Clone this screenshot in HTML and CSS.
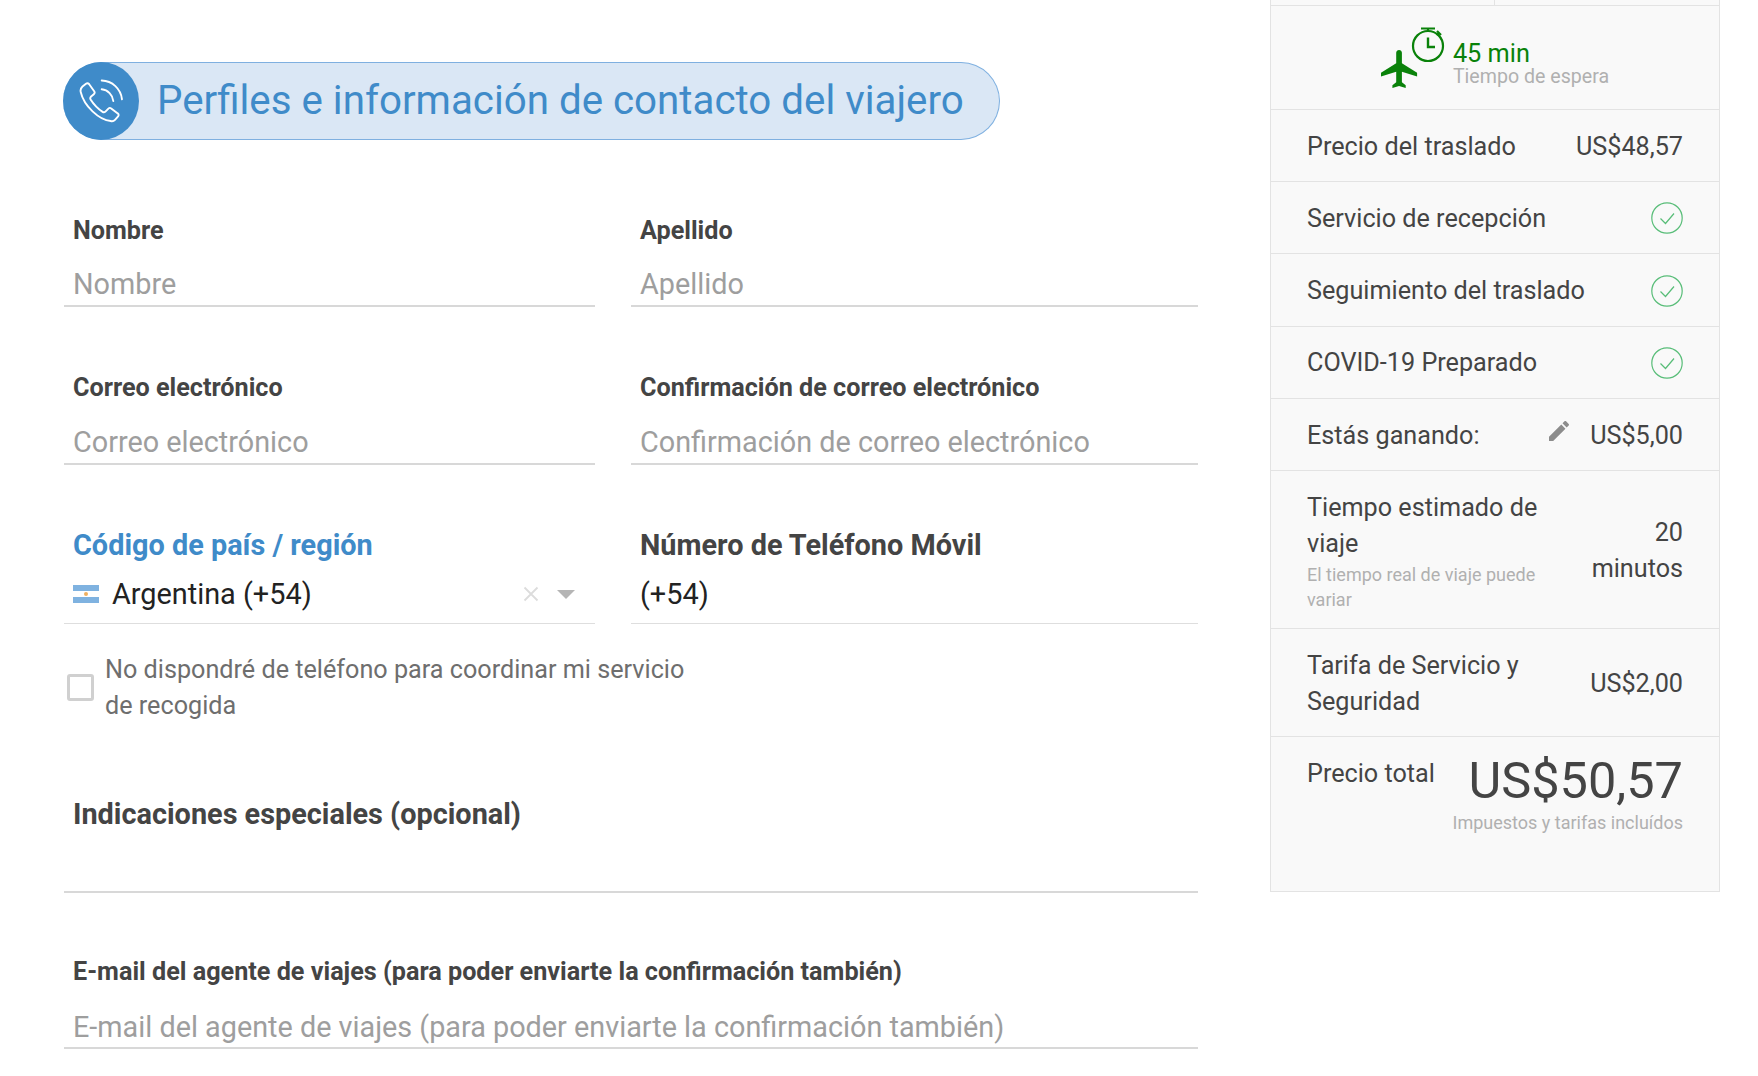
FILE: index.html
```html
<!DOCTYPE html>
<html lang="es">
<head>
<meta charset="utf-8">
<title>Perfiles e información de contacto del viajero</title>
<link rel="stylesheet" href="styles.css">
</head>
<body>
<div class="page">
  <main class="form">
    <h1 class="pill">
      <span class="pill-icon">
        <svg class="phone" viewBox="0 0 44 44" fill="none" stroke="#fff" stroke-width="1.9" stroke-linecap="round" stroke-linejoin="round">
          <path d="M22.700 10.300a13 13 0 0 1 11.600 11.700"/>
          <path d="M22.700 1.500a21 21 0 0 1 20.300 18.800"/>
          <path d="M3.500 7.500 7 4.700c1-.8 2.200-.6 3 .3l5.200 7.300c.7 1 .5 2.100-.4 2.900l-2.700 2.300c-1 .9-1.100 1.900-.5 3 2.800 4.500 7 9 12 12.400 1 .7 2 .5 2.800-.3l3-3c.8-.8 1.900-.9 2.800-.2l6.600 5c1 .7 1.100 2.100.3 3l-3.100 3.400c-1.100 1.200-2.700 1.700-4.300 1.200C20 41 5 27 1.700 13c-.5-2.100.3-4.100 1.800-5.500z"/>
        </svg>
      </span>
      <span class="pill-text">Perfiles e información de contacto del viajero</span>
    </h1>

    <div class="row row-first">
      <div class="field">
        <div class="label">Nombre</div>
        <div class="control placeholder">Nombre</div>
      </div>
      <div class="field">
        <div class="label">Apellido</div>
        <div class="control placeholder">Apellido</div>
      </div>
    </div>

    <div class="row">
      <div class="field">
        <div class="label">Correo electrónico</div>
        <div class="control placeholder">Correo electrónico</div>
      </div>
      <div class="field">
        <div class="label">Confirmación de correo electrónico</div>
        <div class="control placeholder">Confirmación de correo electrónico</div>
      </div>
    </div>

    <div class="row row-phone">
      <div class="field">
        <div class="label label-lg label-active">Código de país / región</div>
        <div class="control control-select">
          <svg class="flag" viewBox="0 0 26 18">
            <rect width="26" height="6" fill="#7fb2e0"/>
            <rect y="6" width="26" height="6" fill="#fff"/>
            <rect y="12" width="26" height="6" fill="#7fb2e0"/>
            <circle cx="13" cy="9" r="2" fill="#f0b060"/>
          </svg>
          <span class="select-value">Argentina (+54)</span>
          <svg class="clear" viewBox="0 0 16 16" fill="none" stroke="#dcdcdc" stroke-width="1.800">
            <path d="M1.500 1.500l13 13M14.500 1.500l-13 13"/>
          </svg>
          <span class="caret"></span>
        </div>
      </div>
      <div class="field">
        <div class="label label-lg">Número de Teléfono Móvil</div>
        <div class="control control-select"><span>(+54)</span></div>
      </div>
    </div>

    <label class="check">
      <span class="box"></span>
      <span class="check-text">No dispondré de teléfono para coordinar mi servicio de recogida</span>
    </label>

    <div class="notes">
      <div class="label label-lg">Indicaciones especiales (opcional)</div>
    </div>

    <div class="field agent">
      <div class="label">E-mail del agente de viajes (para poder enviarte la confirmación también)</div>
      <div class="control placeholder">E-mail del agente de viajes (para poder enviarte la confirmación también)</div>
    </div>
  </main>

  <aside class="summary">
    <div class="stub"><span class="stub-cell"></span></div>
    <div class="wait">
      <svg class="wait-icon" viewBox="0 0 64 64">
        <path fill="#0a820a" transform="translate(-3.800 19.200) scale(1.9)" d="M21 16v-2l-8-5V3.500c0-.83-.67-1.500-1.500-1.500S10 2.670 10 3.500V9l-8 5v2l8-2.500V19l-2 1.500V22l3.500-1 3.500 1v-1.500L13 19v-5.500l8 2.500z"/>
        <g fill="none" stroke="#0a820a" stroke-width="2.200">
          <circle cx="47" cy="19" r="15"/>
          <path d="M40 1.500h14M47 1.500V4M58 5.500l-2.500 2.500M56 4l4 4"/>
          <path d="M47 10.500V20h7" stroke-width="2.400"/>
        </g>
      </svg>
      <div class="wait-text">
        <div class="wait-time">45 min</div>
        <div class="wait-sub">Tiempo de espera</div>
      </div>
    </div>
    <div class="line"><span>Precio del traslado</span><span>US$48,57</span></div>
    <div class="line"><span>Servicio de recepción</span><svg class="ok" viewBox="0 0 32 32" fill="none" stroke="#58bd78" stroke-width="1.200"><circle cx="16" cy="16" r="15.200"/><path d="M9.500 16.500l5 5 8.500-10"/></svg></div>
    <div class="line"><span>Seguimiento del traslado</span><svg class="ok" viewBox="0 0 32 32" fill="none" stroke="#58bd78" stroke-width="1.200"><circle cx="16" cy="16" r="15.200"/><path d="M9.500 16.500l5 5 8.500-10"/></svg></div>
    <div class="line"><span>COVID-19 Preparado</span><svg class="ok" viewBox="0 0 32 32" fill="none" stroke="#58bd78" stroke-width="1.200"><circle cx="16" cy="16" r="15.200"/><path d="M9.500 16.500l5 5 8.500-10"/></svg></div>
    <div class="line">
      <span>Estás ganando:</span>
      <span class="earn">
        <svg class="pencil" viewBox="3 3 18 18"><path fill="#8c8c8c" d="M3 17.250V21h3.750L17.810 9.940l-3.750-3.750L3 17.250zM20.710 7.040c.39-.39.39-1.020 0-1.410l-2.340-2.340c-.39-.39-1.020-.39-1.410 0l-1.830 1.830 3.750 3.750 1.830-1.830z"/></svg>
        <span>US$5,00</span>
      </span>
    </div>
    <div class="line">
      <div class="line-main">
        Tiempo estimado de viaje
        <div class="line-sub">El tiempo real de viaje puede variar</div>
      </div>
      <div class="line-value">20 minutos</div>
    </div>
    <div class="line">
      <div class="line-main line-main-wide">Tarifa de Servicio y Seguridad</div>
      <div class="line-value">US$2,00</div>
    </div>
    <div class="total">
      <div class="total-label">Precio total</div>
      <div class="total-side">
        <div class="total-value">US$50,57</div>
        <div class="total-sub">Impuestos y tarifas incluídos</div>
      </div>
    </div>
  </aside>
</div>
</body>
</html>
```

FILE: styles.css
```css
* { box-sizing: border-box; }
html, body { margin: 0; padding: 0; background: #fff; }
body {
  font-family: Roboto, "Liberation Sans", sans-serif;
  color: #444;
  overflow: hidden;
}
.page {
  display: flex;
  align-items: flex-start;
  gap: 72px;
  padding-left: 64px;
  height: 1076px;
  overflow: hidden;
}
.form { width: 1134px; flex: none; padding-top: 62px; }

.pill {
  display: flex;
  align-items: center;
  width: 937px;
  height: 78px;
  margin: 0 0 0 -1px;
  background: #dae7f5;
  border: 1px solid #7fb0e0;
  border-left: 0;
  border-radius: 39px;
  font-weight: 400;
}
.pill-icon {
  flex: none;
  display: flex;
  align-items: center;
  justify-content: center;
  width: 76px;
  height: 78px;
  border-radius: 50%;
  background: #3f8bc9;
}
.phone { width: 44px; height: 44px; }
.pill-text {
  margin: -1px 0 0 18px;
  font-size: 40.300px;
  line-height: 48px;
  color: #3f8bc9;
  white-space: nowrap;
}

.row {
  display: grid;
  grid-template-columns: 531px 567px;
  column-gap: 36px;
  margin-top: 64px;
}
.row-first { margin-top: 74px; }
.row-phone { margin-top: 63px; }
.label {
  padding-left: 9px;
  font-size: 25.200px;
  font-weight: 700;
  line-height: 34px;
  color: #444;
  white-space: nowrap;
}
.label-lg { font-size: 28.850px; }
.label-active { color: #3f8bc9; }
.control {
  margin-top: 17px;
  padding: 0 9px 2px;
  height: 43px;
  font-size: 28.800px;
  line-height: 40px;
  border-bottom: 2px solid #d8d8d8;
  white-space: nowrap;
}
.row-first .control { margin-top: 16px; }
.placeholder { color: #9e9e9e; }
.control-select {
  display: flex;
  align-items: center;
  margin-top: 12px;
  height: 50px;
  padding-bottom: 9px;
  color: #222;
  font-size: 28.850px;
  border-bottom: 1px solid #dedede;
}
.flag { width: 26px; height: 18px; flex: none; margin-right: 13px; }
.select-value { flex: 1; }
.clear { width: 16px; height: 16px; flex: none; margin-right: 18px; }
.caret {
  flex: none;
  margin-right: 11px;
  border-left: 9px solid transparent;
  border-right: 9px solid transparent;
  border-top: 9px solid #b5b5b5;
}

.check {
  display: flex;
  align-items: center;
  margin-top: 28px;
  padding-left: 3px;
}
.box {
  flex: none;
  width: 27px;
  height: 27px;
  margin-top: -2px;
  border: 3px solid #d0d0d0;
  border-radius: 3px;
  background: #fff;
}
.check-text {
  width: 600px;
  margin-left: 11px;
  font-size: 25.200px;
  line-height: 36px;
  color: #6e6e6e;
}

.notes {
  height: 96px;
  margin-top: 73px;
  border-bottom: 2px solid #d8d8d8;
}
.agent { margin-top: 62px; }
.agent .control { margin-top: 18px; height: 42px; }

.summary {
  flex: none;
  width: 450px;
  background: #f9f9f9;
  border-left: 1px solid #e3e3e3;
  border-right: 1px solid #e3e3e3;
  border-bottom: 1px solid #e3e3e3;
  font-size: 25.200px;
}
.stub { height: 6px; border-bottom: 1px solid #e3e3e3; }
.stub-cell { display: block; width: 224px; height: 5px; border-right: 1px solid #e3e3e3; }
.wait {
  display: flex;
  align-items: flex-start;
  justify-content: center;
  height: 104px;
  padding-top: 21px;
  border-bottom: 1px solid #e3e3e3;
}
.wait-icon { width: 64px; height: 64px; flex: none; margin-right: 8px; }
.wait-time { margin-top: 13px; font-size: 25.300px; line-height: 28px; color: #0a820a; }
.wait-sub { font-size: 19.600px; line-height: 18px; color: #b0b0b0; }
.line {
  display: flex;
  align-items: center;
  justify-content: space-between;
  padding: 18.800px 36px 16.400px;
  line-height: 36px;
  border-bottom: 1px solid #e3e3e3;
}
.ok { width: 32px; height: 32px; flex: none; margin-top: -1px; }
.earn { display: flex; align-items: center; }
.pencil { width: 20px; height: 20px; margin-right: 21px; margin-top: -10px; }
.line-main { width: 250px; }
.line-main-wide { width: 260px; }
.line-sub { font-size: 18px; line-height: 25px; color: #b0b0b0; }
.line-value { text-align: right; width: 110px; }
.total {
  display: flex;
  justify-content: space-between;
  height: 154px;
  padding: 19px 36px 0;
}
.total-label { line-height: 36px; }
.total-side { text-align: right; }
.total-value { font-size: 50.500px; line-height: 50px; }
.total-sub { margin-top: 5px; font-size: 18px; line-height: 24px; color: #b0b0b0; }
```
